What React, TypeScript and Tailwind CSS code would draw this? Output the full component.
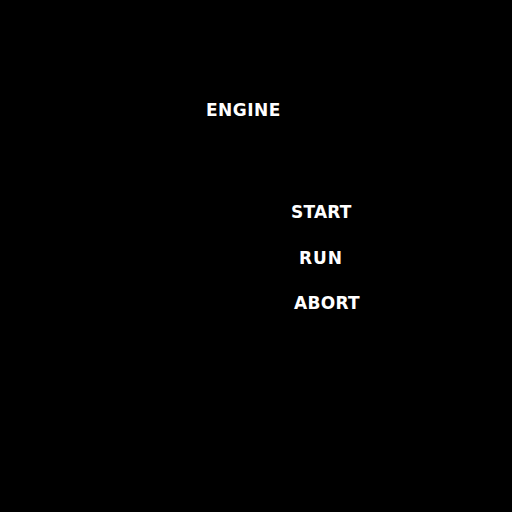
export default function App() {
  return (
    <div className="w-[512px] h-[512px] bg-black text-white font-bold text-[17px] leading-none" style={{ fontFamily: '"DejaVu Sans", sans-serif' }}>
      <div className="pt-[102px] pl-[206px] tracking-[0.5px]">ENGINE</div>
      <div className="pt-[85px] pl-[291px] tracking-[0.2px]">START</div>
      <div className="pt-[29px] pl-[299px] tracking-[0.9px]">RUN</div>
      <div className="pt-[28px] pl-[294px] tracking-[0.3px]">ABORT</div>
    </div>
  );
}
